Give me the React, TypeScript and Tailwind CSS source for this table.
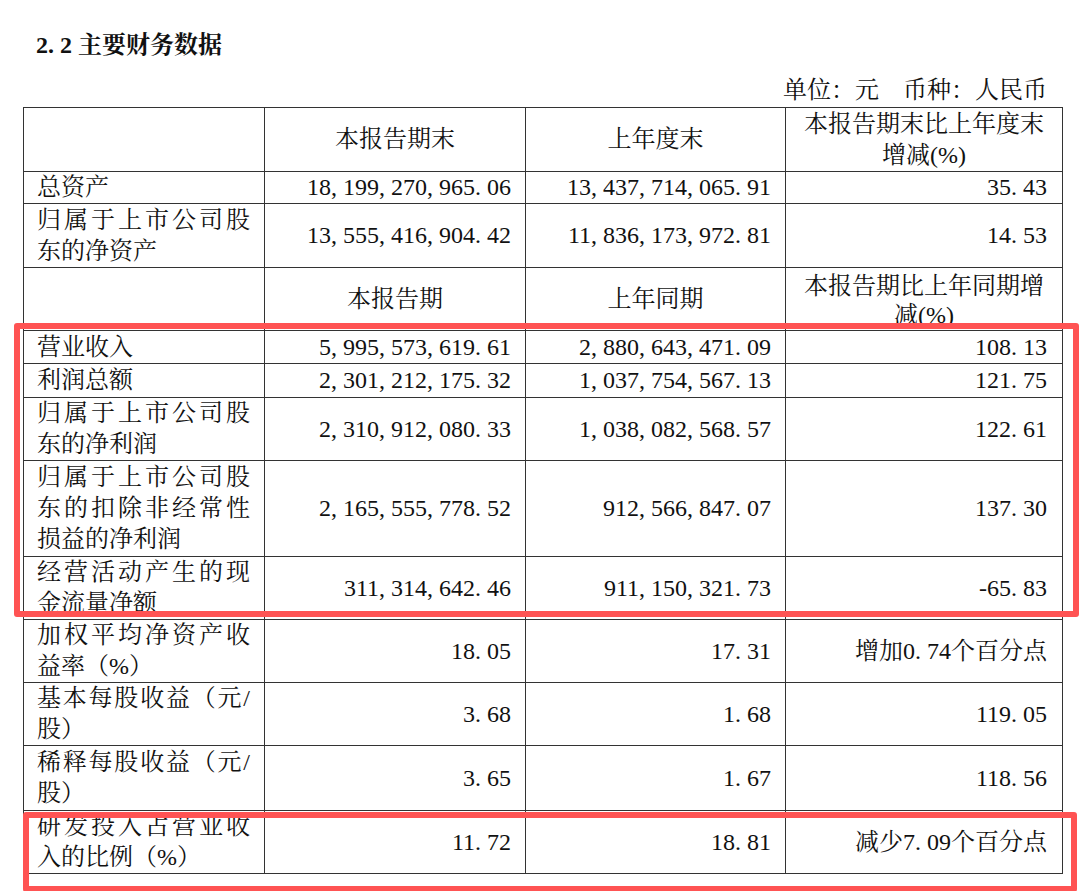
import React from "react";

const FONT = {
  fontFamily:
    '"Liberation Serif", "Noto Serif CJK SC", "Noto Sans CJK SC", serif',
};

function T({ s }: { s: string }) {
  const out: React.ReactNode[] = [];
  let buf = "";
  const flush = (k: number) => {
    if (buf) {
      out.push(<React.Fragment key={"t" + k}>{buf}</React.Fragment>);
      buf = "";
    }
  };
  Array.from(s).forEach((c, i) => {
    if (c === "," || c === ".") {
      flush(i);
      out.push(
        <span key={i} className="inline-block w-[0.5em] text-left">
          {c}
        </span>
      );
    } else if (c === "-") {
      flush(i);
      out.push(
        <span key={i} className="inline-block w-[0.5em] text-right">
          {c}
        </span>
      );
    } else {
      buf += c;
    }
  });
  flush(s.length + 1);
  return <>{out}</>;
}

function Label({ lines }: { lines: string[] }) {
  return (
    <div className="leading-[31px]">
      {lines.map((l, i) =>
        i < lines.length - 1 ? (
          <span
            key={i}
            className="block whitespace-nowrap text-justify [text-align-last:justify]"
          >
            {l}
          </span>
        ) : (
          <span key={i} className="block whitespace-nowrap">
            {l}
          </span>
        )
      )}
    </div>
  );
}

type Row = {
  h: string;
  label: string[];
  a: string;
  b: string;
  c: string;
};

const rowsTop: Row[] = [
  {
    h: "h-[32px]",
    label: ["总资产"],
    a: "18,199,270,965.06",
    b: "13,437,714,065.91",
    c: "35.43",
  },
  {
    h: "h-[64px]",
    label: ["归属于上市公司股", "东的净资产"],
    a: "13,555,416,904.42",
    b: "11,836,173,972.81",
    c: "14.53",
  },
];

const rowsBottom: Row[] = [
  {
    h: "h-[33px]",
    label: ["营业收入"],
    a: "5,995,573,619.61",
    b: "2,880,643,471.09",
    c: "108.13",
  },
  {
    h: "h-[34px]",
    label: ["利润总额"],
    a: "2,301,212,175.32",
    b: "1,037,754,567.13",
    c: "121.75",
  },
  {
    h: "h-[63px]",
    label: ["归属于上市公司股", "东的净利润"],
    a: "2,310,912,080.33",
    b: "1,038,082,568.57",
    c: "122.61",
  },
  {
    h: "h-[96px]",
    label: ["归属于上市公司股", "东的扣除非经常性", "损益的净利润"],
    a: "2,165,555,778.52",
    b: "912,566,847.07",
    c: "137.30",
  },
  {
    h: "h-[63px]",
    label: ["经营活动产生的现", "金流量净额"],
    a: "311,314,642.46",
    b: "911,150,321.73",
    c: "-65.83",
  },
  {
    h: "h-[63px]",
    label: ["加权平均净资产收", "益率（%）"],
    a: "18.05",
    b: "17.31",
    c: "增加0.74个百分点",
  },
  {
    h: "h-[63px]",
    label: ["基本每股收益（元/", "股）"],
    a: "3.68",
    b: "1.68",
    c: "119.05",
  },
  {
    h: "h-[65px]",
    label: ["稀释每股收益（元/", "股）"],
    a: "3.65",
    b: "1.67",
    c: "118.56",
  },
  {
    h: "h-[63px]",
    label: ["研发投入占营业收", "入的比例（%）"],
    a: "11.72",
    b: "18.81",
    c: "减少7.09个百分点",
  },
];

const td = "border border-[#333] align-middle p-0 leading-[31px]";

function DataRow({ r }: { r: Row }) {
  return (
    <tr className={r.h}>
      <td className={`${td} pl-[13px] pr-[14px]`}>
        <Label lines={r.label} />
      </td>
      <td className={`${td} pr-[14px] text-right whitespace-nowrap`}>
        <T s={r.a} />
      </td>
      <td className={`${td} pr-[14px] text-right whitespace-nowrap`}>
        <T s={r.b} />
      </td>
      <td className={`${td} pr-[15px] text-right whitespace-nowrap`}>
        <T s={r.c} />
      </td>
    </tr>
  );
}

export default function App() {
  return (
    <div
      className="relative w-[1080px] h-[891px] overflow-hidden bg-white text-[#111] text-[24px]"
      style={FONT}
    >
      <div className="pl-[36px] pt-[29px] leading-[32px] font-bold">
        <T s="2.2" /> 主要财务数据
      </div>
      <div className="mt-[13px] pr-[33px] text-right leading-[32px]">
        单位：元　币种：人民币
      </div>
      <table className="ml-[23px] mt-[1px] w-[1039px] table-fixed border-collapse leading-[31px]">
        <colgroup>
          <col className="w-[241px]" />
          <col className="w-[261px]" />
          <col className="w-[260px]" />
          <col className="w-[277px]" />
        </colgroup>
        <tbody>
          <tr className="h-[64px]">
            <td className={td}></td>
            <td className={`${td} text-center`}>本报告期末</td>
            <td className={`${td} text-center`}>上年度末</td>
            <td className={`${td} text-center`}>
              <div>本报告期末比上年度末</div>
              <div>增减(%)</div>
            </td>
          </tr>
          {rowsTop.map((r, i) => (
            <DataRow key={"t" + i} r={r} />
          ))}
          <tr className="h-[62px]">
            <td className={td}></td>
            <td className={`${td} text-center`}>本报告期</td>
            <td className={`${td} text-center`}>上年同期</td>
            <td className="border border-[#333] align-top p-0 pt-[4px] text-center leading-[29px]">
              <div>本报告期比上年同期增</div>
              <div>减(%)</div>
            </td>
          </tr>
          {rowsBottom.map((r, i) => (
            <DataRow key={"b" + i} r={r} />
          ))}
        </tbody>
      </table>

      <div className="pointer-events-none absolute left-[14px] top-[323px] w-[1065px] h-[294px] rounded-[3px] border-[6px] border-[#ff5353]" />
      <div className="pointer-events-none absolute left-[23px] top-[812px] w-[1054px] h-[80px] rounded-[3px] border-[6px] border-[#ff5353]" />
    </div>
  );
}
